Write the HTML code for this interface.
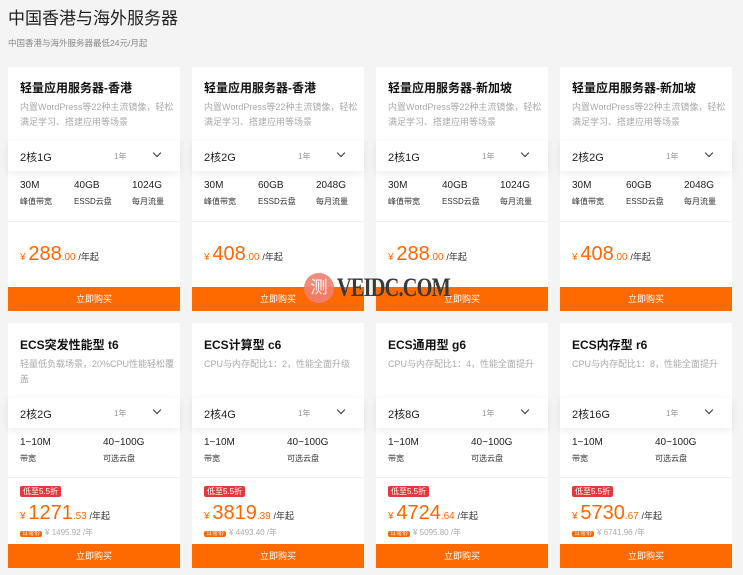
<!DOCTYPE html>
<html><head><meta charset="utf-8"><style>
*{margin:0;padding:0;box-sizing:border-box}
body{width:743px;height:575px;background:#f4f4f4;font-family:"Liberation Sans","Noto Sans CJK SC",sans-serif;position:relative;overflow:hidden;color:#333}
h1{position:absolute;left:8px;top:4px;font-size:17px;font-weight:normal;color:#222}
.sub{position:absolute;left:8px;top:37px;font-size:8.5px;color:#888}
.card{position:absolute;width:172px;background:#fff}
.t{position:absolute;left:12px;font-size:12px;font-weight:bold;color:#111}
.d{position:absolute;left:12px;width:162px;font-size:9px;line-height:15px;color:#aaa}
.dd{position:absolute;left:0;width:172px;height:30px;background:#fff;box-shadow:0 2px 8px rgba(0,0,0,.08);font-size:11px}
.dd .a{position:absolute;left:12px;top:8px;color:#222}
.dd .y{position:absolute;left:106px;top:10px;font-size:8px;color:#999}
.dd .c{position:absolute;left:146px;top:9px;width:6px;height:6px;border-right:1.3px solid #333;border-bottom:1.3px solid #333;transform:rotate(45deg)}
.sp{position:absolute;font-size:10px;color:#222}
.sp b{font-weight:normal;display:block;font-size:8px;color:#333;margin-top:5px}
.hr{position:absolute;left:0;width:172px;border-top:1px solid #f0f0f0}
.pr{position:absolute;left:12px;color:#f60;font-size:10px;white-space:nowrap}
.pr .n{font-size:20px}
.pr .u{color:#333;font-size:9px}
.btn{position:absolute;left:0;width:172px;height:24px;background:#ff6a00;color:#fff;font-size:9px;text-align:center;line-height:24px}
.bd{position:absolute;left:12px;background:#e4393c;color:#fff;font-size:8px;padding:0 3px;height:11px;line-height:11px;border-radius:2px}
.op{position:absolute;left:12px;font-size:8px;color:#aaa;white-space:nowrap}
.op i{font-style:normal;background:#ff6a00;color:#fff;font-size:6px;padding:0 2px;border-radius:2px;margin-right:3px}
</style></head><body>
<h1>中国香港与海外服务器</h1>
<div class="sub">中国香港与海外服务器最低24元/月起</div>

<div class="card" style="left:8px;top:67px;height:244px">
<div class="t" style="top:12px">轻量应用服务器-香港</div>
<div class="d" style="top:33px">内置WordPress等22种主流镜像，轻松满足学习、搭建应用等场景</div>
<div class="dd" style="top:74px"><span class="a">2核1G</span><span class="y">1年</span><span class="c"></span></div>
<div class="sp" style="left:12px;top:113px">30M<b>峰值带宽</b></div><div class="sp" style="left:66px;top:113px">40GB<b>ESSD云盘</b></div><div class="sp" style="left:124px;top:113px">1024G<b>每月流量</b></div>
<div class="hr" style="top:154px"></div>
<div class="pr" style="top:176px">¥ <span class="n">288</span>.00 <span class="u">/年起</span></div>
<div class="btn" style="top:220px">立即购买</div></div>

<div class="card" style="left:192px;top:67px;height:244px">
<div class="t" style="top:12px">轻量应用服务器-香港</div>
<div class="d" style="top:33px">内置WordPress等22种主流镜像，轻松满足学习、搭建应用等场景</div>
<div class="dd" style="top:74px"><span class="a">2核2G</span><span class="y">1年</span><span class="c"></span></div>
<div class="sp" style="left:12px;top:113px">30M<b>峰值带宽</b></div><div class="sp" style="left:66px;top:113px">60GB<b>ESSD云盘</b></div><div class="sp" style="left:124px;top:113px">2048G<b>每月流量</b></div>
<div class="hr" style="top:154px"></div>
<div class="pr" style="top:176px">¥ <span class="n">408</span>.00 <span class="u">/年起</span></div>
<div class="btn" style="top:220px">立即购买</div></div>

<div class="card" style="left:376px;top:67px;height:244px">
<div class="t" style="top:12px">轻量应用服务器-新加坡</div>
<div class="d" style="top:33px">内置WordPress等22种主流镜像，轻松满足学习、搭建应用等场景</div>
<div class="dd" style="top:74px"><span class="a">2核1G</span><span class="y">1年</span><span class="c"></span></div>
<div class="sp" style="left:12px;top:113px">30M<b>峰值带宽</b></div><div class="sp" style="left:66px;top:113px">40GB<b>ESSD云盘</b></div><div class="sp" style="left:124px;top:113px">1024G<b>每月流量</b></div>
<div class="hr" style="top:154px"></div>
<div class="pr" style="top:176px">¥ <span class="n">288</span>.00 <span class="u">/年起</span></div>
<div class="btn" style="top:220px">立即购买</div></div>

<div class="card" style="left:560px;top:67px;height:244px">
<div class="t" style="top:12px">轻量应用服务器-新加坡</div>
<div class="d" style="top:33px">内置WordPress等22种主流镜像，轻松满足学习、搭建应用等场景</div>
<div class="dd" style="top:74px"><span class="a">2核2G</span><span class="y">1年</span><span class="c"></span></div>
<div class="sp" style="left:12px;top:113px">30M<b>峰值带宽</b></div><div class="sp" style="left:66px;top:113px">60GB<b>ESSD云盘</b></div><div class="sp" style="left:124px;top:113px">2048G<b>每月流量</b></div>
<div class="hr" style="top:154px"></div>
<div class="pr" style="top:176px">¥ <span class="n">408</span>.00 <span class="u">/年起</span></div>
<div class="btn" style="top:220px">立即购买</div></div>

<div class="card" style="left:8px;top:323px;height:245px">
<div class="t" style="top:13px">ECS突发性能型 t6</div>
<div class="d" style="top:34px;width:155px">轻量低负载场景，20%CPU性能轻松覆盖</div>
<div class="dd" style="top:75px"><span class="a">2核2G</span><span class="y">1年</span><span class="c"></span></div>
<div class="sp" style="left:12px;top:114px">1~10M<b>带宽</b></div><div class="sp" style="left:95px;top:114px">40~100G<b>可选云盘</b></div>
<div class="hr" style="top:154px"></div>
<div class="bd" style="top:163px">低至5.5折</div>
<div class="pr" style="top:179px">¥ <span class="n">1271</span>.53 <span class="u">/年起</span></div>
<div class="op" style="top:204px"><i>日常价</i>¥ 1495.92 /年</div>
<div class="btn" style="top:221px">立即购买</div></div>

<div class="card" style="left:192px;top:323px;height:245px">
<div class="t" style="top:13px">ECS计算型 c6</div>
<div class="d" style="top:34px">CPU与内存配比1：2，性能全面升级</div>
<div class="dd" style="top:75px"><span class="a">2核4G</span><span class="y">1年</span><span class="c"></span></div>
<div class="sp" style="left:12px;top:114px">1~10M<b>带宽</b></div><div class="sp" style="left:95px;top:114px">40~100G<b>可选云盘</b></div>
<div class="hr" style="top:154px"></div>
<div class="bd" style="top:163px">低至5.5折</div>
<div class="pr" style="top:179px">¥ <span class="n">3819</span>.39 <span class="u">/年起</span></div>
<div class="op" style="top:204px"><i>日常价</i>¥ 4493.40 /年</div>
<div class="btn" style="top:221px">立即购买</div></div>

<div class="card" style="left:376px;top:323px;height:245px">
<div class="t" style="top:13px">ECS通用型 g6</div>
<div class="d" style="top:34px">CPU与内存配比1：4，性能全面提升</div>
<div class="dd" style="top:75px"><span class="a">2核8G</span><span class="y">1年</span><span class="c"></span></div>
<div class="sp" style="left:12px;top:114px">1~10M<b>带宽</b></div><div class="sp" style="left:95px;top:114px">40~100G<b>可选云盘</b></div>
<div class="hr" style="top:154px"></div>
<div class="bd" style="top:163px">低至5.5折</div>
<div class="pr" style="top:179px">¥ <span class="n">4724</span>.64 <span class="u">/年起</span></div>
<div class="op" style="top:204px"><i>日常价</i>¥ 5095.80 /年</div>
<div class="btn" style="top:221px">立即购买</div></div>

<div class="card" style="left:560px;top:323px;height:245px">
<div class="t" style="top:13px">ECS内存型 r6</div>
<div class="d" style="top:34px">CPU与内存配比1：8，性能全面提升</div>
<div class="dd" style="top:75px"><span class="a">2核16G</span><span class="y">1年</span><span class="c"></span></div>
<div class="sp" style="left:12px;top:114px">1~10M<b>带宽</b></div><div class="sp" style="left:95px;top:114px">40~100G<b>可选云盘</b></div>
<div class="hr" style="top:154px"></div>
<div class="bd" style="top:163px">低至5.5折</div>
<div class="pr" style="top:179px">¥ <span class="n">5730</span>.67 <span class="u">/年起</span></div>
<div class="op" style="top:204px"><i>日常价</i>¥ 6741.96 /年</div>
<div class="btn" style="top:221px">立即购买</div></div>

<div style="position:absolute;left:304px;top:273px;width:30px;height:30px;border-radius:50%;background:#f08070;color:#fff;font-size:17px;text-align:center;line-height:30px;opacity:.9">测</div>
<div style="position:absolute;left:337px;top:273px;font-family:'Liberation Serif',serif;font-weight:bold;font-size:26px;color:#3a3a3a;letter-spacing:-1px;transform:scaleX(.78);transform-origin:left top">VEIDC.COM</div>
</body></html>
